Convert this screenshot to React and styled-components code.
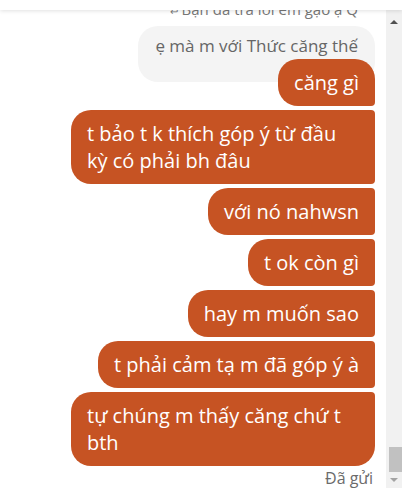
import React from 'react';
import styled, { createGlobalStyle } from 'styled-components';

const GlobalStyle = createGlobalStyle`
  html, body {
    margin: 0;
    padding: 0;
    background: #fff;
  }
  body {
    font-family: 'Open Sans', 'Noto Sans', sans-serif;
  }
`;

const messages = [
  { id: 1, text: 'căng gì' },
  { id: 2, text: 't bảo t k thích góp ý từ đầu kỳ có phải bh đâu' },
  { id: 3, text: 'với nó nahwsn' },
  { id: 4, text: 't ok còn gì' },
  { id: 5, text: 'hay m muốn sao' },
  { id: 6, text: 't phải cảm tạ m đã góp ý à' },
  { id: 7, text: 'tự chúng m thấy căng chứ t bth' },
];

const App = () => {
  return (
    <>
      <GlobalStyle />
      <Window>
        <TopBar />
        <Body>
          <Thread>
            <ReplyLabel>
              <span className="arrow">↩</span>Bạn đã trả lời em gạo ạ Q
            </ReplyLabel>
            <QuotedBubble>ẹ mà m với Thức căng thế</QuotedBubble>
            <Group>
              {messages.map((m, i) => (
                <Bubble
                  key={m.id}
                  $first={i === 0}
                  $last={i === messages.length - 1}
                >
                  {m.text}
                </Bubble>
              ))}
            </Group>
            <Status>Đã gửi</Status>
          </Thread>
          <Scrollbar>
            <Arrow $up />
            <Track />
            <Thumb />
            <Arrow />
          </Scrollbar>
        </Body>
      </Window>
    </>
  );
};

const Window = styled.div`
  width: 402px;
  height: 503px;
  display: flex;
  flex-direction: column;
  background: #fff;
  overflow: hidden;
`;

const TopBar = styled.div`
  height: 10px;
  flex-shrink: 0;
  background: #fff;
  position: relative;
  z-index: 1;
  box-shadow: 0 1px 4px rgba(0, 0, 0, 0.12);
`;

const Body = styled.div`
  display: flex;
  height: 478px;
  flex-shrink: 0;
`;

const Thread = styled.div`
  flex: 1;
  display: flex;
  flex-direction: column;
  align-items: flex-end;
  padding-right: 11px;
  overflow: hidden;
`;

const ReplyLabel = styled.div`
  margin-top: -10px;
  margin-right: 17px;
  font-size: 15px;
  line-height: 18px;
  color: #777;
  white-space: nowrap;
  .arrow {
    font-size: 10px;
    margin-right: 4px;
  }
`;

const QuotedBubble = styled.div`
  margin-top: 6px;
  padding: 7px 17px 23px 17px;
  background: #f4f4f4;
  color: #666;
  font-size: 17px;
  line-height: 26px;
  border-radius: 20px;
`;

const Group = styled.div`
  margin-top: -23px;
  display: flex;
  flex-direction: column;
  align-items: flex-end;
  gap: 4px;
  position: relative;
`;

const Bubble = styled.div`
  max-width: 304px;
  box-sizing: border-box;
  padding: 10px 16px;
  background: #c65323;
  color: #fff;
  font-size: 20px;
  line-height: 27px;
  border-radius: 20px 4px 4px 20px;
  ${(p) => p.$first && 'border-top-right-radius: 20px;'}
  ${(p) => p.$last && 'border-bottom-right-radius: 20px;'}
`;

const Status = styled.div`
  margin-top: 1px;
  margin-right: 2px;
  font-size: 16px;
  line-height: 22px;
  color: #6b6b6b;
`;

const Scrollbar = styled.div`
  width: 16px;
  flex-shrink: 0;
  height: 478px;
  background: #f1f1f1;
  display: flex;
  flex-direction: column;
  align-items: center;
`;

const Arrow = styled.div`
  width: 0;
  height: 0;
  margin: ${(p) => (p.$up ? '10px 0 5px' : '6px 0 6px')};
  border-left: 4px solid transparent;
  border-right: 4px solid transparent;
  ${(p) =>
    p.$up
      ? 'border-bottom: 4px solid #505050;'
      : 'border-top: 4px solid #a3a3a3;'}
`;

const Track = styled.div`
  flex: 1;
`;

const Thumb = styled.div`
  width: 13px;
  height: 25px;
  margin-left: 2px;
  background: #c1c1c1;
`;

export default App;
